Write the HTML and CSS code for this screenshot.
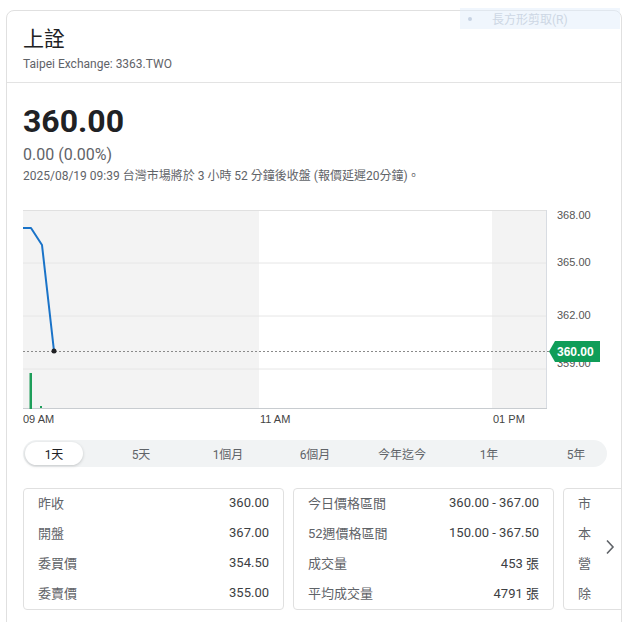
FILE: index.html
```html
<!DOCTYPE html>
<html lang="zh-Hant">
<head>
<meta charset="utf-8">
<title>上詮</title>
<link rel="stylesheet" href="styles.css">
</head>
<body>
<div class="snip-hint"><span class="snip-dot"></span><span class="snip-text">長方形剪取(R)</span></div>
<div class="card">
  <div class="head">
    <div class="title">上詮</div>
    <div class="sub">Taipei Exchange: 3363.TWO</div>
  </div>
  <div class="body">
    <div class="price">360.00</div>
    <div class="change">0.00 (0.00%)</div>
    <div class="time">2025/08/19 09:39 台灣市場將於 3 小時 52 分鐘後收盤 (報價延遲20分鐘)。</div>

    <svg class="chart" width="590" height="222" viewBox="0 0 590 222">
      <rect x="0" y="5" width="236" height="199" fill="#f3f3f3"/>
      <rect x="469" y="5" width="55" height="199" fill="#f3f3f3"/>
      <line x1="0" y1="58" x2="524" y2="58" stroke="#e6e6e6" stroke-width="1"/>
      <line x1="0" y1="111" x2="524" y2="111" stroke="#e6e6e6" stroke-width="1"/>
      <line x1="0" y1="164" x2="524" y2="164" stroke="#e6e6e6" stroke-width="1"/>
      <line x1="0" y1="5.5" x2="524" y2="5.5" stroke="#e0e0e0" stroke-width="1"/>
      <line x1="523.5" y1="5" x2="523.5" y2="204" stroke="#d8dce2" stroke-width="1"/>
      <line x1="0" y1="203.5" x2="524" y2="203.5" stroke="#c8ccd0" stroke-width="1"/>
      <line x1="0" y1="146.5" x2="526" y2="146.5" stroke="#8a8a8a" stroke-width="1" stroke-dasharray="2,2"/>
      <polyline points="0,23 8,23 19,40 31,146" fill="none" stroke="#1a73c8" stroke-width="2" stroke-linejoin="round"/>
      <circle cx="31" cy="146" r="2.5" fill="#202124"/>
      <rect x="6.5" y="168" width="2.5" height="36" fill="#1e9e5a"/>
      <rect x="17" y="201" width="2" height="2" fill="#1e9e5a"/>
      <g class="ylab">
        <text x="534" y="14">368.00</text>
        <text x="534" y="61">365.00</text>
        <text x="534" y="114">362.00</text>
        <text x="534" y="162">359.00</text>
      </g>
      <path d="M526 146.5 L532 136 L577 136 L577 157 L532 157 Z" fill="#0f9d58"/>
      <text class="badge" x="534" y="151">360.00</text>
      <g class="xlab">
        <text x="0" y="218">09 AM</text>
        <text x="237" y="218">11 AM</text>
        <text x="470" y="218">01 PM</text>
      </g>
    </svg>

    <div class="tabs">
      <div class="tab active">1天</div>
      <div class="tab">5天</div>
      <div class="tab">1個月</div>
      <div class="tab">6個月</div>
      <div class="tab">今年迄今</div>
      <div class="tab">1年</div>
      <div class="tab">5年</div>
    </div>

    <div class="stats-wrap">
      <div class="stats">
        <div class="stat-card">
          <div class="row"><span class="k">昨收</span><span class="v">360.00</span></div>
          <div class="row"><span class="k">開盤</span><span class="v">367.00</span></div>
          <div class="row"><span class="k">委買價</span><span class="v">354.50</span></div>
          <div class="row"><span class="k">委賣價</span><span class="v">355.00</span></div>
        </div>
        <div class="stat-card">
          <div class="row"><span class="k">今日價格區間</span><span class="v">360.00 - 367.00</span></div>
          <div class="row"><span class="k">52週價格區間</span><span class="v">150.00 - 367.50</span></div>
          <div class="row"><span class="k">成交量</span><span class="v">453 張</span></div>
          <div class="row"><span class="k">平均成交量</span><span class="v">4791 張</span></div>
        </div>
        <div class="stat-card peek">
          <div class="row"><span class="k">市</span></div>
          <div class="row"><span class="k">本</span></div>
          <div class="row"><span class="k">營</span></div>
          <div class="row"><span class="k">除</span></div>
        </div>
      </div>
      <div class="fade"></div>
      <svg class="chev" width="10" height="16" viewBox="0 0 10 16"><path d="M2 1.5 L8 8 L2 14.5" fill="none" stroke="#5f6368" stroke-width="1.6"/></svg>
    </div>
  </div>
</div>
</body>
</html>
```

FILE: styles.css
```css
html, body {
  margin: 0;
  padding: 0;
  background: #ffffff;
}
body {
  font-family: "Roboto", "Noto Sans CJK TC", sans-serif;
  color: #202124;
  width: 644px;
  height: 622px;
  overflow: hidden;
  position: relative;
}
.snip-hint {
  position: absolute;
  left: 460px;
  top: 8px;
  width: 160px;
  height: 21px;
  background: rgba(225, 238, 252, 0.5);
  display: flex;
  align-items: center;
  z-index: 5;
}
.snip-dot {
  width: 4px;
  height: 4px;
  border-radius: 50%;
  background: #c7d3e3;
  margin-left: 8px;
}
.snip-text {
  margin-left: 20px;
  font-size: 12px;
  color: #cdd6e4;
}
.card {
  margin: 10px 0 0 6px;
  width: 616px;
  border: 1px solid #e0e0e0;
  border-radius: 8px;
  height: 640px;
  box-sizing: border-box;
}
.head {
  padding: 14px 16px 10px 16px;
  border-bottom: 1px solid #e3e3e3;
}
.title {
  font-size: 21px;
  line-height: 28px;
  color: #202124;
}
.sub {
  font-size: 12px;
  line-height: 16px;
  color: #5f6368;
  margin-top: 3px;
}
.body {
  padding: 17px 14px 0 16px;
}
.price {
  font-size: 32px;
  font-weight: 700;
  line-height: 42px;
  color: #202124;
}
.change {
  font-size: 16px;
  line-height: 20px;
  color: #5f6368;
  margin-top: 3px;
}
.time {
  font-size: 12px;
  line-height: 16px;
  color: #5f6368;
  margin-top: 3px;
}
.chart {
  display: block;
  margin-top: 21px;
}
.ylab text {
  font-family: "Liberation Sans", sans-serif;
  font-size: 11px;
  fill: #555555;
}
.xlab text {
  font-family: "Liberation Sans", sans-serif;
  font-size: 11px;
  fill: #444444;
}
.badge {
  font-family: "Liberation Sans", sans-serif;
  font-size: 12px;
  font-weight: 700;
  fill: #ffffff;
}
.tabs {
  margin-top: 13px;
  width: 584px;
  height: 27px;
  box-sizing: border-box;
  padding: 2px;
  background: #f1f3f4;
  border-radius: 14px;
  display: flex;
  justify-content: space-between;
  align-items: center;
}
.tab {
  width: 58px;
  height: 23px;
  border-radius: 12px;
  display: flex;
  align-items: center;
  justify-content: center;
  font-size: 12px;
  color: #5f6368;
}
.tab.active {
  background: #ffffff;
  color: #202124;
  box-shadow: 0 1px 3px rgba(60, 64, 67, 0.25);
}
.stats-wrap {
  position: relative;
  margin-top: 21px;
  margin-right: -14px;
  overflow: hidden;
}
.stats {
  display: flex;
  gap: 9px;
  width: 800px;
}
.stat-card {
  width: 261px;
  flex: none;
  border: 1px solid #e0e0e0;
  border-radius: 4px;
  box-sizing: border-box;
  padding: 0 14px;
}
.row {
  height: 30px;
  box-sizing: border-box;
  padding-bottom: 3px;
  display: flex;
  align-items: center;
  justify-content: space-between;
  font-size: 13px;
}
.k {
  color: #5f6368;
}
.v {
  color: #3c4043;
}
.fade {
  position: absolute;
  left: 578px;
  top: 1px;
  bottom: 1px;
  width: 20px;
  background: linear-gradient(to right, rgba(255,255,255,0), #ffffff 60%);
}
.chev {
  position: absolute;
  left: 582px;
  top: 51px;
}
```
